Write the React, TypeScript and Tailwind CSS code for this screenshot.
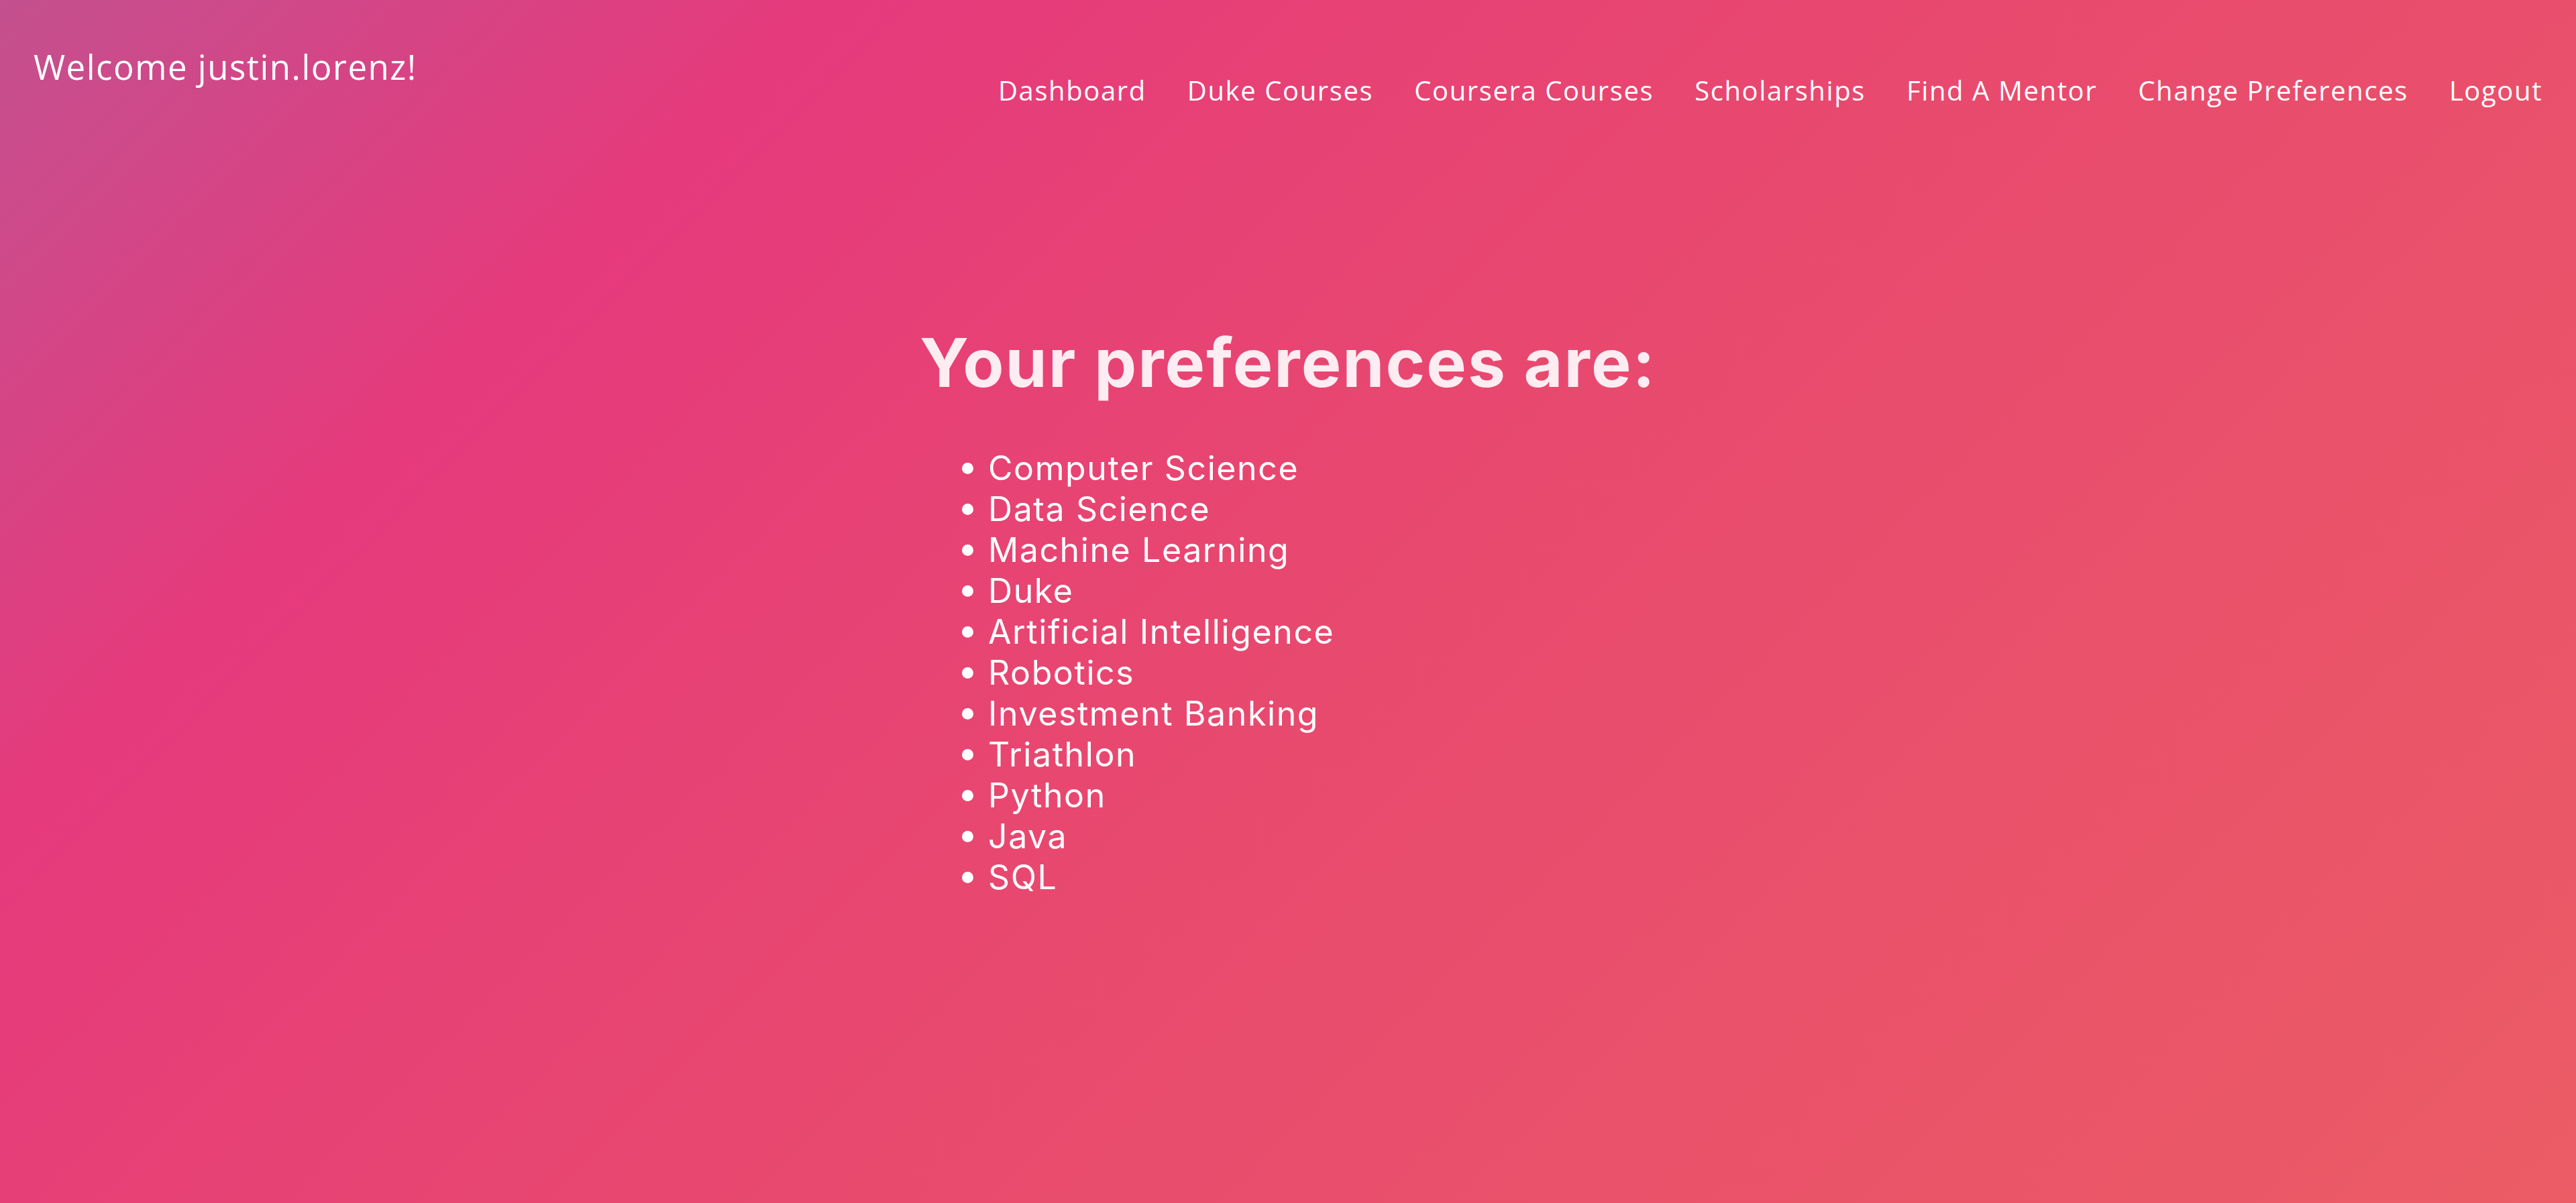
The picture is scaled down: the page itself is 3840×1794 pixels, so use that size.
import React from "react";

const navItems = [
  "Dashboard",
  "Duke Courses",
  "Coursera Courses",
  "Scholarships",
  "Find A Mentor",
  "Change Preferences",
  "Logout",
];

const prefs = [
  "Computer Science",
  "Data Science",
  "Machine Learning",
  "Duke",
  "Artificial Intelligence",
  "Robotics",
  "Investment Banking",
  "Triathlon",
  "Python",
  "Java",
  "SQL",
];

export default function App() {
  return (
    <div className="min-h-screen w-full bg-[linear-gradient(135deg,#c4508f_0%,#e53a7c_22%,#e8486f_50%,#eb5c65_100%)] text-white">
      <header className="flex items-start justify-between px-[50px]">
        <div className="pt-[74px] font-['Open_Sans',sans-serif] text-[51px] leading-none font-normal tracking-[1.5px]">
          Welcome justin.lorenz!
        </div>
        <nav className="flex gap-[61px] pt-[115px] font-['Open_Sans',sans-serif] text-[40px] leading-none tracking-[1.6px]">
          {navItems.map((item) => (
            <a key={item} href="#" className="text-white">
              {item}
            </a>
          ))}
        </nav>
      </header>

      <main className="mx-auto mt-[336px] w-[1200px]">
        <h1 className="whitespace-nowrap text-center font-['Inter',sans-serif] text-[100px] leading-none font-bold tracking-[2px] text-[#fdecf1]">
          Your preferences are:
        </h1>
        <ul className="mt-[77px] pl-[114px] font-['Inter',sans-serif] text-[50px] leading-[61px] tracking-[1.6px]">
          {prefs.map((p) => (
            <li key={p} className="flex items-center gap-[22px]">
              <span className="h-[17px] w-[17px] shrink-0 rounded-full bg-white" />
              <span>{p}</span>
            </li>
          ))}
        </ul>
      </main>
    </div>
  );
}
